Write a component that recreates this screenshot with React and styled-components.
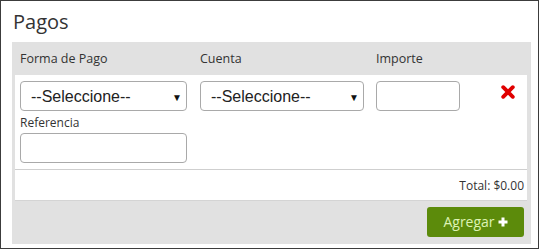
import React from 'react';
import styled, { createGlobalStyle } from 'styled-components';

const GlobalStyle = createGlobalStyle`
  body {
    margin: 0;
    background: #fff;
    font-family: "Open Sans", "Liberation Sans", sans-serif;
    color: #333;
  }
`;

const Frame = styled.div`
  box-sizing: border-box;
  width: 539px;
  height: 249px;
  border: 1px solid #3c3c3c;
  padding: 7px 7px 0 11px;
`;

const Title = styled.h2`
  margin: 0 0 7px 1px;
  font-size: 20px;
  font-weight: 400;
  line-height: 27px;
  color: #333;
`;

const Table = styled.div`
  width: 519px;
  background: #e1e1e1;
`;

const Grid = styled.div`
  display: grid;
  grid-template-columns: 180px 176px 1fr 40px;
  align-items: start;
`;

const HeadRow = styled(Grid)`
  height: 33px;
  align-items: center;
  padding-left: 8px;
  font-size: 12.5px;
`;

const BodyRow = styled(Grid)`
  background: #fff;
  margin: 0 4px 0 3px;
  padding: 6px 0 6px 5px;
  border-bottom: 1px solid #cfcfcf;
`;

const Cell = styled.div`
  display: flex;
  flex-direction: column;
`;

const SelectBox = styled.div`
  position: relative;
  width: ${p => p.$w}px;
`;

const Select = styled.select`
  appearance: none;
  box-sizing: border-box;
  width: 100%;
  height: 30px;
  border: 1px solid #a9a9a9;
  border-radius: 4px;
  background: #fff;
  padding: 0 0 0 10px;
  font-family: "Liberation Sans", Arial, sans-serif;
  font-size: 16px;
  color: #222;
`;

const Arrow = styled.span`
  position: absolute;
  right: 5px;
  top: 9px;
  font-size: 10px;
  color: #111;
  pointer-events: none;
`;

const Input = styled.input`
  box-sizing: border-box;
  width: ${p => p.$w}px;
  height: 30px;
  border: 1px solid #a9a9a9;
  border-radius: 4px;
  background: #fff;
`;

const SmallLabel = styled.label`
  margin: 4px 0 2px;
  font-size: 12px;
  line-height: 16px;
`;

const RemoveBtn = styled.button`
  border: 0;
  background: none;
  padding: 0;
  margin: 4px 0 0 14px;
  width: 14px;
  height: 14px;
  cursor: pointer;
`;

const TotalRow = styled.div`
  background: #fff;
  margin: 0 4px 0 3px;
  height: 30px;
  display: flex;
  align-items: center;
  justify-content: flex-end;
  padding-right: 3px;
  font-size: 12px;
  border-bottom: 1px solid #d4d4d4;
`;

const Footer = styled.div`
  height: 43px;
  display: flex;
  align-items: flex-start;
  justify-content: flex-end;
  padding: 6px 7px 0 0;
  box-sizing: border-box;
`;

const AddButton = styled.button`
  width: 97px;
  height: 30px;
  border: 0;
  border-radius: 3px;
  background: #5c8b0b;
  color: #def3b4;
  font-family: "Open Sans", sans-serif;
  font-size: 14px;
  display: flex;
  align-items: center;
  justify-content: center;
  gap: 3px;
  padding: 0 0 1px;
`;

const Cross = () => (
  <svg width="14" height="14" viewBox="0 0 14 14">
    <path d="M2.2 2.2 L11.8 11.8 M11.8 2.2 L2.2 11.8" stroke="#e00000" strokeWidth="3.8" strokeLinecap="round" />
  </svg>
);

const Plus = () => (
  <svg width="10" height="10" viewBox="0 0 10 10">
    <path d="M5 0.5 V9.5 M0.5 5 H9.5" stroke="#fff" strokeWidth="3" />
  </svg>
);

export default function App() {
  return (
    <Frame>
      <GlobalStyle />
      <Title>Pagos</Title>
      <Table>
        <HeadRow>
          <span>Forma de Pago</span>
          <span>Cuenta</span>
          <span>Importe</span>
          <span />
        </HeadRow>
        <BodyRow>
          <Cell>
            <SelectBox $w={167}>
              <Select defaultValue="">
                <option value="">--Seleccione--</option>
              </Select>
              <Arrow>▼</Arrow>
            </SelectBox>
            <SmallLabel>Referencia</SmallLabel>
            <Input $w={167} />
          </Cell>
          <Cell>
            <SelectBox $w={164}>
              <Select defaultValue="">
                <option value="">--Seleccione--</option>
              </Select>
              <Arrow>▼</Arrow>
            </SelectBox>
          </Cell>
          <Cell>
            <Input $w={84} />
          </Cell>
          <Cell>
            <RemoveBtn aria-label="Eliminar"><Cross /></RemoveBtn>
          </Cell>
        </BodyRow>
        <TotalRow>Total: $0.00</TotalRow>
        <Footer>
          <AddButton>Agregar <Plus /></AddButton>
        </Footer>
      </Table>
    </Frame>
  );
}
